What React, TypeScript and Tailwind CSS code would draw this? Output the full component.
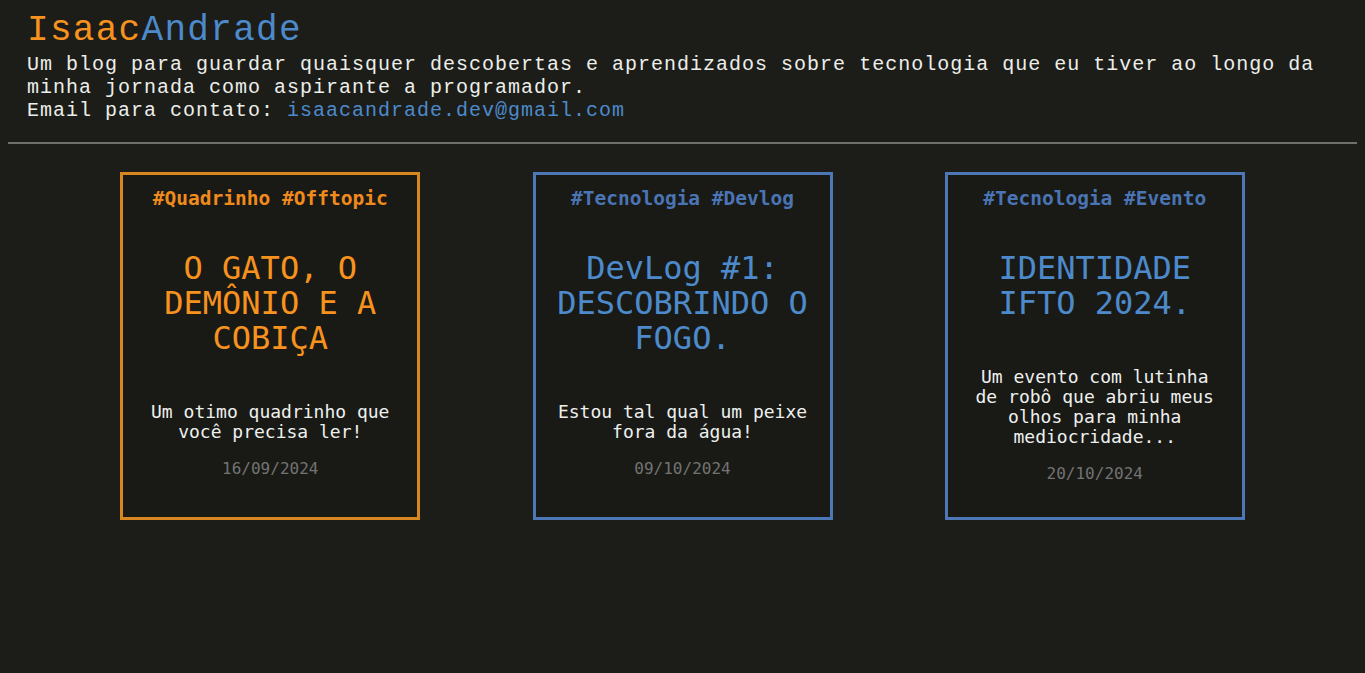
const posts = [
  {
    tags: "#Quadrinho #Offtopic",
    titulo: "O GATO, O DEMÔNIO E A COBIÇA",
    resumo: "Um otimo quadrinho que você precisa ler!",
    data: "16/09/2024",
    laranja: true,
  },
  {
    tags: "#Tecnologia #Devlog",
    titulo: "DevLog #1: DESCOBRINDO O FOGO.",
    resumo: "Estou tal qual um peixe fora da água!",
    data: "09/10/2024",
    laranja: false,
  },
  {
    tags: "#Tecnologia #Evento",
    titulo: "IDENTIDADE IFTO 2024.",
    resumo: "Um evento com lutinha de robô que abriu meus olhos para minha mediocridade...",
    data: "20/10/2024",
    laranja: false,
  },
];

type Post = (typeof posts)[number];

function CardPost({ post }: { post: Post }) {
  return (
    <article
      className={`flex h-[348px] w-[300px] flex-col items-center border-[3px] bg-[#191a16] px-5 pt-[13px] text-center font-['DejaVu_Sans_Mono',monospace] ${
        post.laranja ? "border-[#d8861f]" : "border-[#4d77b6]"
      }`}
    >
      <span
        className={`text-[19.5px] font-bold leading-[22px] ${
          post.laranja ? "text-[#f08a1c]" : "text-[#4a74b4]"
        }`}
      >
        {post.tags}
      </span>
      <h2
        className={`mt-[41px] text-[32px] leading-[35px] ${
          post.laranja ? "text-[#f7921e]" : "text-[#4d8acb]"
        }`}
      >
        {post.titulo}
      </h2>
      <p className="mt-[46px] text-[18px] leading-[20px] text-[#eef0ee]">
        {post.resumo}
      </p>
      <span className="mt-[17px] text-[16px] leading-[20px] text-[#737373]">
        {post.data}
      </span>
    </article>
  );
}

export default function App() {
  return (
    <div className="min-h-screen bg-[#1c1d19] font-['Liberation_Mono',monospace]">
      <header className="px-[27px] pt-[11px]">
        <h1 className="text-[36px] leading-[40px] tracking-[1.3px]">
          <span className="text-[#f7921e]">Isaac</span>
          <span className="text-[#4d8acb]">Andrade</span>
        </h1>
        <p className="mt-[2px] text-[20px] leading-[23px] tracking-[1px] text-[#eceeea]">
          Um blog para guardar quaisquer descobertas e aprendizados sobre
          tecnologia que eu tiver ao longo da minha jornada como aspirante a
          programador.
          <br />
          Email para contato:{" "}
          <a href="#" className="text-[#4d8acb]">
            isaacandrade.dev@gmail.com
          </a>
        </p>
      </header>

      <hr className="mx-2 mt-[20px] border-t-2 border-[#6f706c]" />

      <main className="mt-[28px] flex justify-evenly px-2">
        {posts.map((post) => (
          <CardPost key={post.data} post={post} />
        ))}
      </main>
    </div>
  );
}
